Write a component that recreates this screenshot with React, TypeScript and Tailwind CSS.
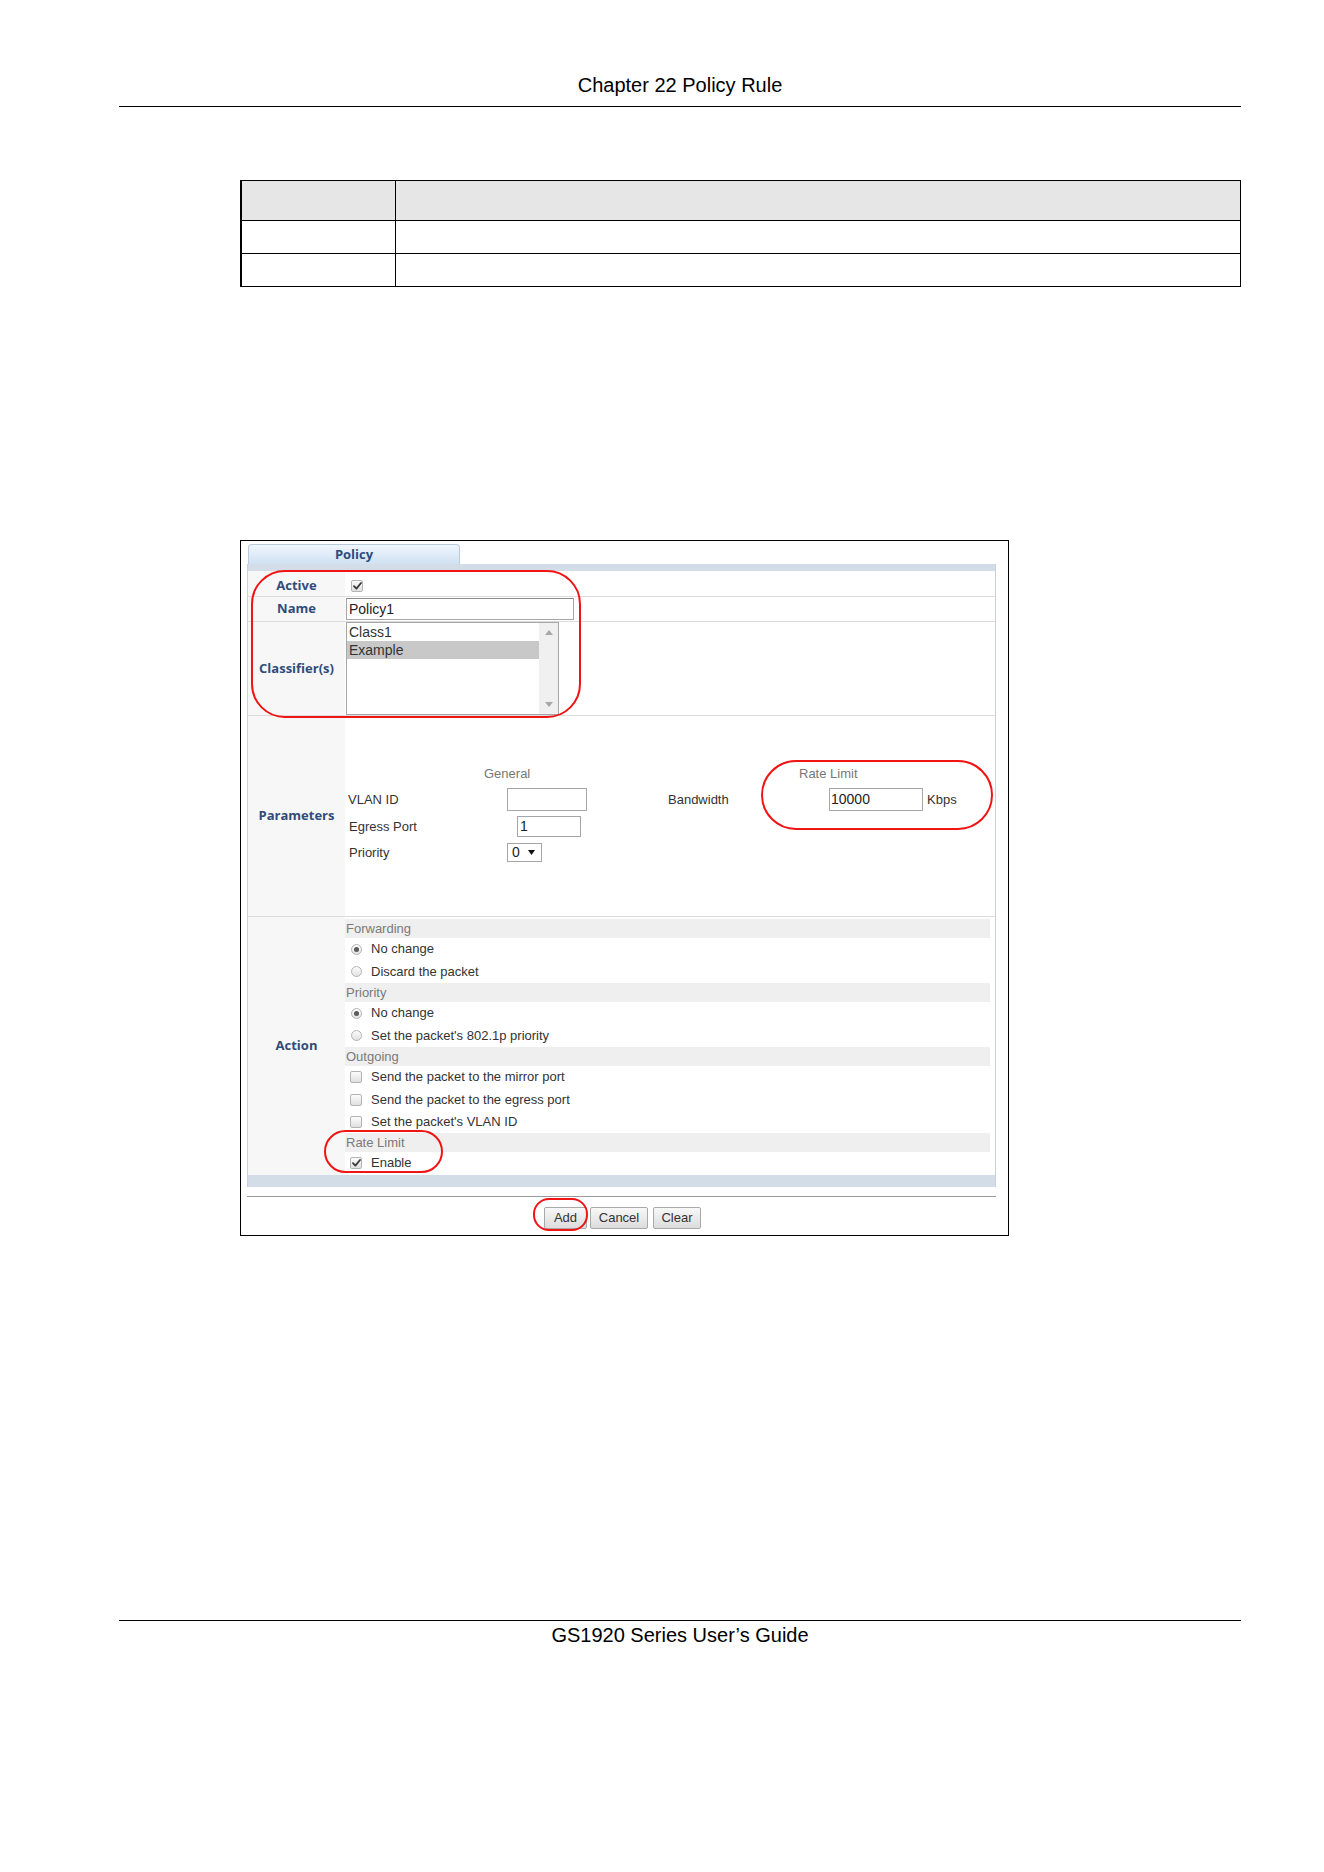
import React from "react";

const labelCls =
  "w-[97px] shrink-0 bg-[#f7f7f7] flex items-center justify-center font-['Open_Sans',sans-serif] font-bold text-[13px] text-[#2f4c7c]";

function Radio({ checked }: { checked?: boolean }) {
  return (
    <span className="w-[11px] h-[11px] rounded-full border border-[#b4b4b4] bg-gradient-to-b from-[#fbfbfb] to-[#e2e2e2] flex items-center justify-center shrink-0">
      {checked && <span className="w-[5px] h-[5px] rounded-full bg-[#5a5a5a]" />}
    </span>
  );
}

function Check({ checked }: { checked?: boolean }) {
  return (
    <span className="w-[12px] h-[12px] rounded-[2px] border border-[#b4b4b4] bg-gradient-to-b from-[#fcfcfc] to-[#e0e0e0] flex items-center justify-center shrink-0">
      {checked && (
        <svg width="9" height="8" viewBox="0 0 9 8">
          <path d="M1 4.2 L3.4 6.6 L8 1" fill="none" stroke="#3a3a3a" strokeWidth="1.8" strokeLinecap="round" strokeLinejoin="round" />
        </svg>
      )}
    </span>
  );
}

function Band({ text }: { text: string }) {
  return (
    <div className="h-[19px] mr-[5px] bg-[#efefef] pl-[1px] text-[13px] leading-[19px] text-[#7a7a7a]">{text}</div>
  );
}

function RadioOpt({ text, checked, h }: { text: string; checked?: boolean; h: string }) {
  return (
    <div className={`${h} flex items-center pl-[6px]`}>
      <Radio checked={checked} />
      <span className="ml-[9px] text-[13px] text-[#333]">{text}</span>
    </div>
  );
}

function CheckOpt({ text, checked, h }: { text: string; checked?: boolean; h: string }) {
  return (
    <div className={`${h} flex items-center pl-[5px]`}>
      <Check checked={checked} />
      <span className="ml-[9px] text-[13px] text-[#333]">{text}</span>
    </div>
  );
}

function Btn({ text, w }: { text: string; w: string }) {
  return (
    <button
      className={`${w} h-[22px] border border-[#a9a9a9] rounded-[2px] bg-gradient-to-b from-[#f8f8f8] to-[#dcdcdc] text-[13px] text-[#333] leading-[20px]`}
    >
      {text}
    </button>
  );
}

export default function App() {
  return (
    <div className="w-[1324px] h-[1872px] bg-white text-black font-['Liberation_Sans',Arial,sans-serif]">
      <div className="ml-[119px] w-[1122px]">
        {/* running header */}
        <div className="pt-[74px] pb-[9px] border-b border-black text-center text-[20px] leading-[23px]">
          Chapter 22 Policy Rule
        </div>

        {/* empty field table */}
        <div className="mt-[73px] ml-[121px] w-[1001px] border border-l-2 border-black">
          <div className="flex h-[40px] bg-[#e6e6e6] border-b border-black">
            <div className="w-[154px] border-r border-black" />
            <div className="flex-1" />
          </div>
          <div className="flex h-[33px] border-b border-black">
            <div className="w-[154px] border-r border-black" />
            <div className="flex-1" />
          </div>
          <div className="flex h-[32px]">
            <div className="w-[154px] border-r border-black" />
            <div className="flex-1" />
          </div>
        </div>

        {/* policy screen */}
        <div className="relative mt-[253px] ml-[121px] w-[769px] h-[696px] border border-black pl-[6px] pt-[3px]">
          <div className="w-[749px]">
            <div className="ml-[1px] w-[212px] h-[20px] rounded-t-[4px] border border-b-0 border-[#b9cadb] bg-gradient-to-b from-[#f0f6fc] to-[#cfe1f3] text-center font-['Open_Sans',sans-serif] font-bold text-[13px] leading-[19px] text-[#2f4c7c]">
              Policy
            </div>
            <div className="border-x border-[#c9d1da]">
              <div className="h-[7px] bg-[#d3dde8]" />

              {/* Active */}
              <div className="flex h-[26px] border-b border-[#dcdcdc]">
                <div className={`${labelCls} pt-[4px]`}>Active</div>
                <div className="flex items-center pl-[6px] pt-[5px]">
                  <Check checked />
                </div>
              </div>

              {/* Name */}
              <div className="flex h-[25px] border-b border-[#dcdcdc]">
                <div className={labelCls}>Name</div>
                <div className="pl-[1px] pt-[1px]">
                  <div className="w-[228px] h-[22px] border border-[#a6a6a6] border-t-[#8a8a8a] bg-white pl-[2px] text-[14px] leading-[20px] text-[#222]">
                    Policy1
                  </div>
                </div>
              </div>

              {/* Classifiers */}
              <div className="flex h-[94px] border-b border-[#dcdcdc]">
                <div className={labelCls}>Classifier(s)</div>
                <div className="pl-[1px]">
                  <div className="w-[213px] h-[93px] border border-[#a6a6a6] bg-white flex">
                    <div className="flex-1 text-[14px] leading-[18px] text-[#333]">
                      <div className="pl-[2px]">Class1</div>
                      <div className="pl-[2px] bg-[#c8c8c8]">Example</div>
                    </div>
                    <div className="w-[19px] bg-[#f0f0f0] flex flex-col items-center justify-between py-[7px]">
                      <svg width="8" height="5" viewBox="0 0 8 5">
                        <path d="M0 5 L4 0 L8 5 Z" fill="#a8a8a8" />
                      </svg>
                      <svg width="8" height="5" viewBox="0 0 8 5">
                        <path d="M0 0 L4 5 L8 0 Z" fill="#a8a8a8" />
                      </svg>
                    </div>
                  </div>
                </div>
              </div>

              {/* Parameters */}
              <div className="flex h-[201px] border-b border-[#dcdcdc]">
                <div className={labelCls}>Parameters</div>
                <div className="flex-1 pl-[3px] text-[13px] text-[#333]">
                  <div className="flex h-[16px] mt-[50px] leading-[16px] text-[#777]">
                    <span className="w-[136px]" />
                    <span className="w-[315px]">General</span>
                    <span>Rate Limit</span>
                  </div>
                  <div className="flex items-center h-[23px] mt-[6px]">
                    <span className="w-[159px]">VLAN ID</span>
                    <span className="w-[80px] h-[23px] border border-[#a6a6a6] bg-white" />
                    <span className="w-[81px]" />
                    <span className="w-[161px]">Bandwidth</span>
                    <span className="w-[94px] h-[23px] border border-[#a6a6a6] bg-white pl-[1px] text-[14px] leading-[21px] text-[#222]">
                      10000
                    </span>
                    <span className="ml-[4px]">Kbps</span>
                  </div>
                  <div className="flex items-center h-[21px] mt-[5px]">
                    <span className="w-[169px] pl-[1px]">Egress Port</span>
                    <span className="w-[64px] h-[21px] border border-[#a6a6a6] bg-white pl-[2px] text-[14px] leading-[19px] text-[#222]">
                      1
                    </span>
                  </div>
                  <div className="flex items-center h-[19px] mt-[6px]">
                    <span className="w-[159px] pl-[1px]">Priority</span>
                    <span className="w-[35px] h-[19px] border border-[#a6a6a6] bg-white flex items-center pl-[4px] text-[14px] text-[#222]">
                      0
                      <svg className="ml-[8px]" width="7" height="5" viewBox="0 0 7 5">
                        <path d="M0 0 L3.5 5 L7 0 Z" fill="#111" />
                      </svg>
                    </span>
                  </div>
                </div>
              </div>

              {/* Action */}
              <div className="flex h-[258px]">
                <div className={labelCls}>Action</div>
                <div className="flex-1 pt-[2px]">
                  <Band text="Forwarding" />
                  <RadioOpt text="No change" checked h="h-[22px]" />
                  <RadioOpt text="Discard the packet" h="h-[23px]" />
                  <Band text="Priority" />
                  <RadioOpt text="No change" checked h="h-[22px]" />
                  <RadioOpt text="Set the packet's 802.1p priority" h="h-[23px]" />
                  <Band text="Outgoing" />
                  <CheckOpt text="Send the packet to the mirror port" h="h-[22px]" />
                  <CheckOpt text="Send the packet to the egress port" h="h-[23px]" />
                  <CheckOpt text="Set the packet's VLAN ID" h="h-[22px]" />
                  <Band text="Rate Limit" />
                  <CheckOpt text="Enable" checked h="h-[22px]" />
                </div>
              </div>

              <div className="h-[12px] bg-[#d3dde8]" />
            </div>

            <div className="mt-[9px] border-t border-[#9a9a9a]" />
            <div className="mt-[10px] flex pl-[297px]">
              <Btn text="Add" w="w-[43px]" />
              <span className="w-[3px]" />
              <Btn text="Cancel" w="w-[58px]" />
              <span className="w-[5px]" />
              <Btn text="Clear" w="w-[48px]" />
            </div>
          </div>

          {/* red call-outs */}
          <div className="absolute left-[10px] top-[29px] w-[330px] h-[148px] border-2 border-[#f01414] rounded-[34px]" />
          <div className="absolute left-[520px] top-[219px] w-[232px] h-[70px] border-2 border-[#f01414] rounded-[35px]" />
          <div className="absolute left-[83px] top-[589px] w-[119px] h-[43px] border-2 border-[#f01414] rounded-[22px]" />
          <div className="absolute left-[292px] top-[657px] w-[55px] h-[33px] border-2 border-[#f01414] rounded-[16px]" />
        </div>

        {/* running footer */}
        <div className="mt-[384px] border-t border-black pt-[3px] text-center text-[20px] leading-[23px]">
          GS1920 Series User’s Guide
        </div>
      </div>
    </div>
  );
}
